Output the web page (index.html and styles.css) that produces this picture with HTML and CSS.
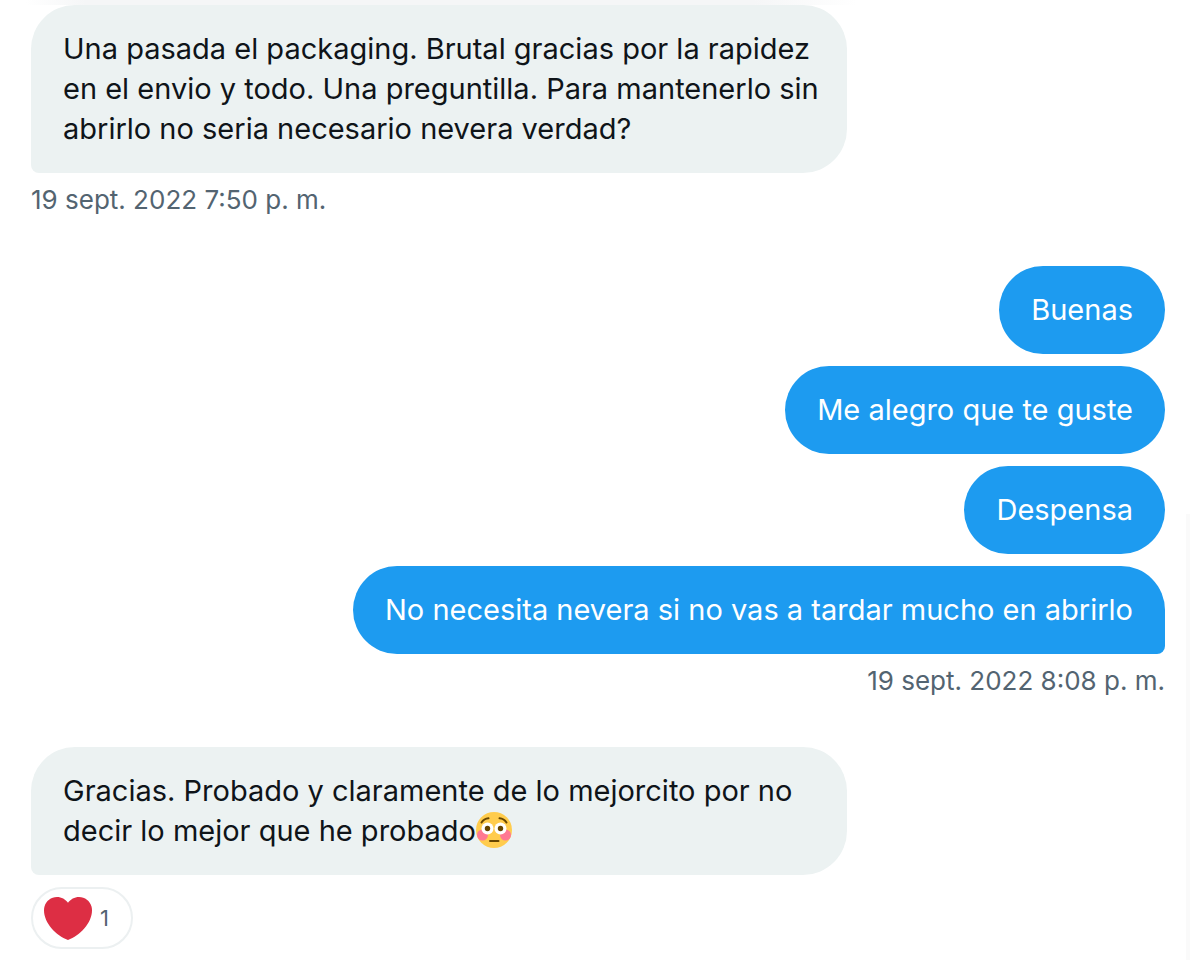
FILE: index.html
```html
<!DOCTYPE html>
<html lang="es">
<head>
<meta charset="utf-8">
<meta name="viewport" content="width=device-width, initial-scale=1">
<title>Mensajes</title>
<link rel="stylesheet" href="styles.css">
</head>
<body>
<div class="top-shade"></div>
<div class="side-edge"></div>
<main class="chat">
  <section class="group received">
    <p class="bubble tail">Una pasada el packaging. Brutal gracias por la rapidez en el envio y todo. Una preguntilla. Para mantenerlo sin abrirlo no seria necesario nevera verdad?</p>
    <time class="stamp">19 sept. 2022 7:50 p. m.</time>
  </section>
  <section class="group sent">
    <p class="bubble">Buenas</p>
    <p class="bubble">Me alegro que te guste</p>
    <p class="bubble">Despensa</p>
    <p class="bubble tail">No necesita nevera si no vas a tardar mucho en abrirlo</p>
    <time class="stamp">19 sept. 2022 8:08 p. m.</time>
  </section>
  <section class="group received">
    <p class="bubble tail">Gracias. Probado y claramente de lo mejorcito por no decir lo mejor que he probado<svg class="emoji" viewBox="0 0 36 36" role="img" aria-label="Cara sonrojada">
      <circle cx="18" cy="18" r="18" fill="#ffcc4d"/>
      <circle cx="6.500" cy="23" r="5.500" fill="#ff7892"/>
      <circle cx="29.500" cy="23" r="5.500" fill="#ff7892"/>
      <circle cx="11.500" cy="16.500" r="6" fill="#fff"/>
      <circle cx="24.500" cy="16.500" r="6" fill="#fff"/>
      <circle cx="11.500" cy="16.500" r="2.700" fill="#664500"/>
      <circle cx="24.500" cy="16.500" r="2.700" fill="#664500"/>
      <path d="M5.500 10.500Q8 6.700 12.500 6.300M30.500 10.500Q28 6.700 23.500 6.300M14 29H22.500" fill="none" stroke="#664500" stroke-width="2" stroke-linecap="round"/>
    </svg></p>
    <button class="reaction" type="button" aria-label="Me encanta, 1">
      <svg class="heart" viewBox="0 0 48 43" aria-hidden="true"><path d="M47.500 9.600C46 4 41 0 35 0C30.500 0 26.500 2.300 24 5.800C21.500 2.300 17.500 0 13 0C7 0 2 4 .5 9.600C.2 10.700 0 12 0 13.200C0 26 12 38.500 24 43C36 38.500 48 26 48 13.200C48 12 47.800 10.700 47.500 9.600Z" fill="#dd2e44"/></svg>
      <span>1</span>
    </button>
  </section>
</main>
</body>
</html>
```
FILE: styles.css
```css
* {
  box-sizing: border-box;
}

body {
  margin: 0;
  background: #fff;
  color: #0f1419;
  font-family: Inter, "Liberation Sans", sans-serif;
  font-size: 29px;
  line-height: 40px;
}

.top-shade {
  height: 5px;
  width: 72%;
  background: linear-gradient(90deg, #fff 3%, #f5f6f7 10%, #f5f6f7 88%, #fff);
}

.side-edge {
  position: fixed;
  top: 514px;
  right: 0;
  bottom: 0;
  width: 4px;
  background: #fafafa;
}

.chat {
  display: flex;
  flex-direction: column;
  gap: 51px;
  padding: 0 25px 12px 31px;
}

.group {
  display: flex;
  flex-direction: column;
  gap: 12px;
}

.received {
  align-items: flex-start;
}

.sent {
  align-items: flex-end;
}

.bubble {
  margin: 0;
  padding: 24px 32px;
  border-radius: 44px;
}

.received .bubble {
  max-width: 72%;
  padding-right: 24px;
  background: #ecf2f2;
}

.sent .bubble {
  background: #1d9bf0;
  color: #fff;
}

.received .tail {
  border-bottom-left-radius: 8px;
}

.sent .tail {
  border-bottom-right-radius: 8px;
}

.stamp {
  color: #536471;
  font-size: 26px;
  line-height: 30px;
}

.emoji {
  width: 36px;
  height: 36px;
  vertical-align: text-bottom;
}

.reaction {
  display: flex;
  align-items: center;
  gap: 8px;
  height: 62px;
  padding: 0 22px 0 11px;
  border: 2px solid #ecf0f1;
  border-radius: 31px;
  background: #fff;
  color: #536471;
  font: inherit;
  font-size: 22px;
}

.heart {
  width: 48px;
  height: 43px;
}
```
